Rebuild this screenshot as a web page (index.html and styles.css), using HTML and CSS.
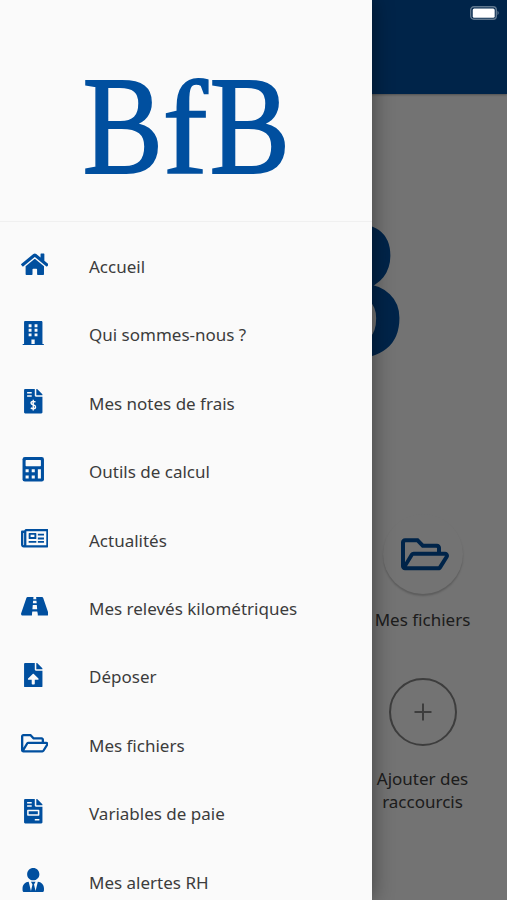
FILE: index.html
```html
<!DOCTYPE html>
<html lang="fr">
<head>
<meta charset="utf-8">
<title>BfB</title>
<link rel="stylesheet" href="styles.css">
</head>
<body>
<svg class="defs" aria-hidden="true">
  <symbol id="folder" viewBox="0 0 576 512"><path d="M527.9 224H480v-48c0-26.500-21.500-48-48-48H272l-64-64H48C21.500 64 0 85.500 0 112v288c0 26.500 21.500 48 48 48h400c16.500 0 31.900-8.500 40.700-22.600l79.900-128c20-31.900-3-73.400-40.700-73.400zM48 118c0-3.300 2.700-6 6-6h134.100l64 64H426c3.300 0 6 2.700 6 6v42H152c-16.800 0-32.400 8.800-41.100 23.200L48 351.400zm400 282H72l77.200-128H528z"/></symbol>
</svg>
<div class="page">
  <header class="topbar"></header>
  <div class="hero">
    <svg class="hero-logo" width="507" height="200" viewBox="0 0 507 200"><text class="wordmark" transform="translate(285.500 162) scale(1.26 1.4)">B</text></svg>
  </div>
  <div class="shortcuts">
    <div class="shortcut">
      <span class="round filled"><svg class="big-icon"><use href="#folder"/></svg></span>
      <span class="label">Mes fichiers</span>
    </div>
    <div class="shortcut">
      <span class="round add"><svg width="18" height="18" viewBox="0 0 18 18"><path d="M9 0.500v17M0.500 9h17" fill="none" stroke="#858585" stroke-width="2"/></svg></span>
      <span class="label">Ajouter des<br>raccourcis</span>
    </div>
  </div>
</div>
<div class="backdrop"></div>
<svg class="battery" viewBox="0 0 30 14"><rect x="0.700" y="0.700" width="25.600" height="12.600" rx="3.200" fill="none" stroke="#60788f" stroke-width="1.400"/><rect x="2.700" y="2.400" width="22" height="9.300" rx="1.500" fill="#fff"/><path d="M27.500 4.800q2.500 2.200 0 4.400z" fill="#60788f"/></svg>
<nav class="drawer">
  <div class="brand">
    <svg width="372" height="221" viewBox="0 0 372 221"><g class="wordmark"><text transform="translate(82.500 172.500) scale(.845 .985)">B</text><text transform="translate(162.500 172.500) scale(.95 .94)">f</text><text transform="translate(209.500 172.500) scale(.845 .985)">B</text></g></svg>
  </div>
  <ul class="menu">
    <li><span class="icon"><svg class="wide" viewBox="0 0 576 512"><path d="M280.370 148.260L96 300.110V464a16 16 0 0 0 16 16l112.060-.29a16 16 0 0 0 15.920-16V368a16 16 0 0 1 16-16h64a16 16 0 0 1 16 16v95.640a16 16 0 0 0 16 16.050L464 480a16 16 0 0 0 16-16V300L295.670 148.260a12.190 12.190 0 0 0-15.300 0zM571.600 251.470L488 182.560V44.050a12 12 0 0 0-12-12h-56a12 12 0 0 0-12 12v72.610L318.470 43a48 48 0 0 0-61 0L4.340 251.470a12 12 0 0 0-1.600 16.900l25.500 31A12 12 0 0 0 45.150 301l235.220-193.740a12.190 12.190 0 0 1 15.300 0L530.900 301a12 12 0 0 0 16.900-1.600l25.500-31a12 12 0 0 0-1.700-16.930z"/></svg></span>Accueil</li>
    <li><span class="icon"><svg viewBox="0 0 448 512"><path d="M436 480h-20V24c0-13.300-10.700-24-24-24H56C42.700 0 32 10.700 32 24v456H12c-6.600 0-12 5.400-12 12v20h448v-20c0-6.600-5.400-12-12-12z"/><path class="cut" d="M128 68h60v60h-60zM252 68h60v60h-60zM128 164h60v60h-60zM252 164h60v60h-60zM128 260h60v60h-60zM252 260h60v60h-60zM186 384h68v96h-68z"/></svg></span>Qui sommes-nous ?</li>
    <li><span class="icon"><svg viewBox="0 0 384 512"><path d="M24 0h200v136c0 13 11 24 24 24h136v328c0 13-11 24-24 24H24c-13 0-24-11-24-24V24C0 11 11 0 24 0zM256 0h6c6 0 12 2.500 17 7l98 98c4 4 7 10 7 17v6H256z"/><path class="cut" d="M64 64h96v32H64zM64 128h96v32H64z"/><path d="M238 274c-14-12-26-16-46-16-28 0-46 14-46 35 0 25 22 31 46 39s48 15 48 42c0 24-20 38-48 38-23 0-36-6-51-18M192 224v224" fill="none" stroke="#fafafa" stroke-width="29"/></svg></span>Mes notes de frais</li>
    <li><span class="icon"><svg viewBox="0 0 448 512"><rect width="448" height="512" rx="48"/><path class="cut" d="M76 64h296q12 0 12 12v104q0 12-12 12H76q-12 0-12-12V76q0-12 12-12zM64 256h64v64H64zM192 256h64v64h-64zM64 384h64v64H64zM192 384h64v64h-64zM320 256h64v192h-64z"/></svg></span>Outils de calcul</li>
    <li><span class="icon"><svg class="wide" viewBox="0 0 576 512"><path d="M552 64H112c-20.900 0-38.700 13.400-45.300 32H24c-13.300 0-24 10.700-24 24v272c0 30.900 25.100 56 56 56h496c13.300 0 24-10.700 24-24V88c0-13.300-10.700-24-24-24zM48 392V144h16v248c0 4.400-3.600 8-8 8s-8-3.600-8-8zm480 8H111.400c.4-2.600.6-5.300.6-8V112h416z"/><path fill-rule="evenodd" d="M172 144h136c7 0 12 5 12 12v104c0 7-5 12-12 12H172c-7 0-12-5-12-12V156c0-7 5-12 12-12zm28 40v48h80v-48z"/><path d="M160 312h160v40H160zM352 160h128v40H352zM352 240h128v40H352zM352 312h128v40H352z"/></svg></span>Actualités</li>
    <li><span class="icon"><svg class="wide" viewBox="0 0 576 512"><path d="M573 403L464 83c-4-11-14-19-26-19H138c-12 0-22 8-26 19L3 403c-8 22 6 45 26 45h201l6-64h104l6 64h201c20 0 34-23 26-45z"/><path class="cut" d="M260 64h56l4 44h-64zM253 140h70l5 52h-80zM246 232h84l8 88H238zM236 366h104l9 90H227z"/></svg></span>Mes relevés kilométriques</li>
    <li><span class="icon"><svg viewBox="0 0 384 512"><path d="M24 0h200v136c0 13 11 24 24 24h136v328c0 13-11 24-24 24H24c-13 0-24-11-24-24V24C0 11 11 0 24 0zM256 0h6c6 0 12 2.500 17 7l98 98c4 4 7 10 7 17v6H256z"/><path class="cut" d="M224 352v80c0 9-7 16-16 16h-32c-9 0-16-7-16-16v-80H95c-14 0-21-17-11-27l97-96c6-6 16-6 23 0l96 96c10 10 3 27-11 27z"/></svg></span>Déposer</li>
    <li><span class="icon"><svg class="wide"><use href="#folder"/></svg></span>Mes fichiers</li>
    <li><span class="icon"><svg viewBox="0 0 384 512"><path d="M24 0h200v136c0 13 11 24 24 24h136v328c0 13-11 24-24 24H24c-13 0-24-11-24-24V24C0 11 11 0 24 0zM256 0h6c6 0 12 2.500 17 7l98 98c4 4 7 10 7 17v6H256z"/><path class="cut" fill-rule="evenodd" d="M64 64h96v32H64zM64 128h96v32H64zM80 224h224q16 0 16 16v96q0 16-16 16H80q-16 0-16-16v-96q0-16 16-16zm16 32v64h192v-64zM224 416h96v32h-96z"/></svg></span>Variables de paie</li>
    <li><span class="icon"><svg viewBox="0 0 448 512"><path d="M224 256c70.700 0 128-57.300 128-128S294.700 0 224 0 96 57.300 96 128s57.300 128 128 128zm95.800 32.600L272 480l-32-136 32-56h-96l32 56-32 136-47.800-191.400C56.900 292 0 350.300 0 422.400V464c0 26.500 21.500 48 48 48h352c26.500 0 48-21.500 48-48v-41.600c0-72.100-56.900-130.400-128.200-133.800z"/></svg></span>Mes alertes RH</li>
  </ul>
</nav>
</body>
</html>
```
FILE: styles.css
```css
* { box-sizing: border-box; }
html, body { margin: 0; height: 900px; overflow: hidden; }
body {
  position: relative;
  width: 507px;
  background: #fafafa;
  font-family: "Noto Sans", "Open Sans", sans-serif;
  font-size: 17px;
  color: #3c3c3c;
}
svg { display: block; fill: #004f9f; }
.defs { position: absolute; width: 0; height: 0; }
.cut { fill: #fafafa; }
.wordmark {
  font-family: "Liberation Serif", serif;
  font-size: 143px;
  fill: #004f9f;
  stroke: #004f9f;
  stroke-width: 1.8px;
}
.page { height: 900px; display: flex; flex-direction: column; }
.topbar { height: 94px; flex: none; background: #004f9f; box-shadow: 0 1px 2px rgba(0,0,0,.3); }
.hero { height: 420px; padding-top: 100px; flex: none; }
.hero-logo .wordmark { stroke-width: 4px; }
.shortcuts { display: grid; grid-template-columns: repeat(3, 169px); grid-template-rows: 164px 150px; }
.shortcut { grid-column: 3; display: flex; flex-direction: column; align-items: center; text-align: center; line-height: 23px; color: #404040; }
.round { display: flex; align-items: center; justify-content: center; border-radius: 50%; }
.filled { width: 80px; height: 80px; margin-bottom: 14px; box-shadow: 0 2px 2px rgba(0,0,0,.2); background: #fafafa; }
.big-icon { width: 48px; height: 42.7px; margin-left: 4px; }
.add { width: 68px; height: 68px; margin-bottom: 21px; border: 2px solid #858585; }
.backdrop { position: absolute; inset: 0; background: rgba(0,0,0,.54); }
.battery { position: absolute; left: 470px; top: 6px; width: 30px; height: 14px; }
.drawer {
  position: absolute;
  inset: 0 auto 0 0;
  width: 372.4px;
  background: #fafafa;
  box-shadow: 0 0 20px rgba(0,0,0,.45);
}
.brand { height: 222px; border-bottom: 1px solid #f0f0f0; }
.menu { list-style: none; margin: 0; padding: 10.3px 0 0; height: 678px; overflow: hidden; }
.menu li { display: flex; align-items: center; height: 68.4px; padding-left: 20.5px; }
.icon { width: 68.5px; flex: none; padding-bottom: 4px; }
.icon svg { width: 24.5px; height: 24.5px; }
.icon .wide { width: 27.6px; }
```
